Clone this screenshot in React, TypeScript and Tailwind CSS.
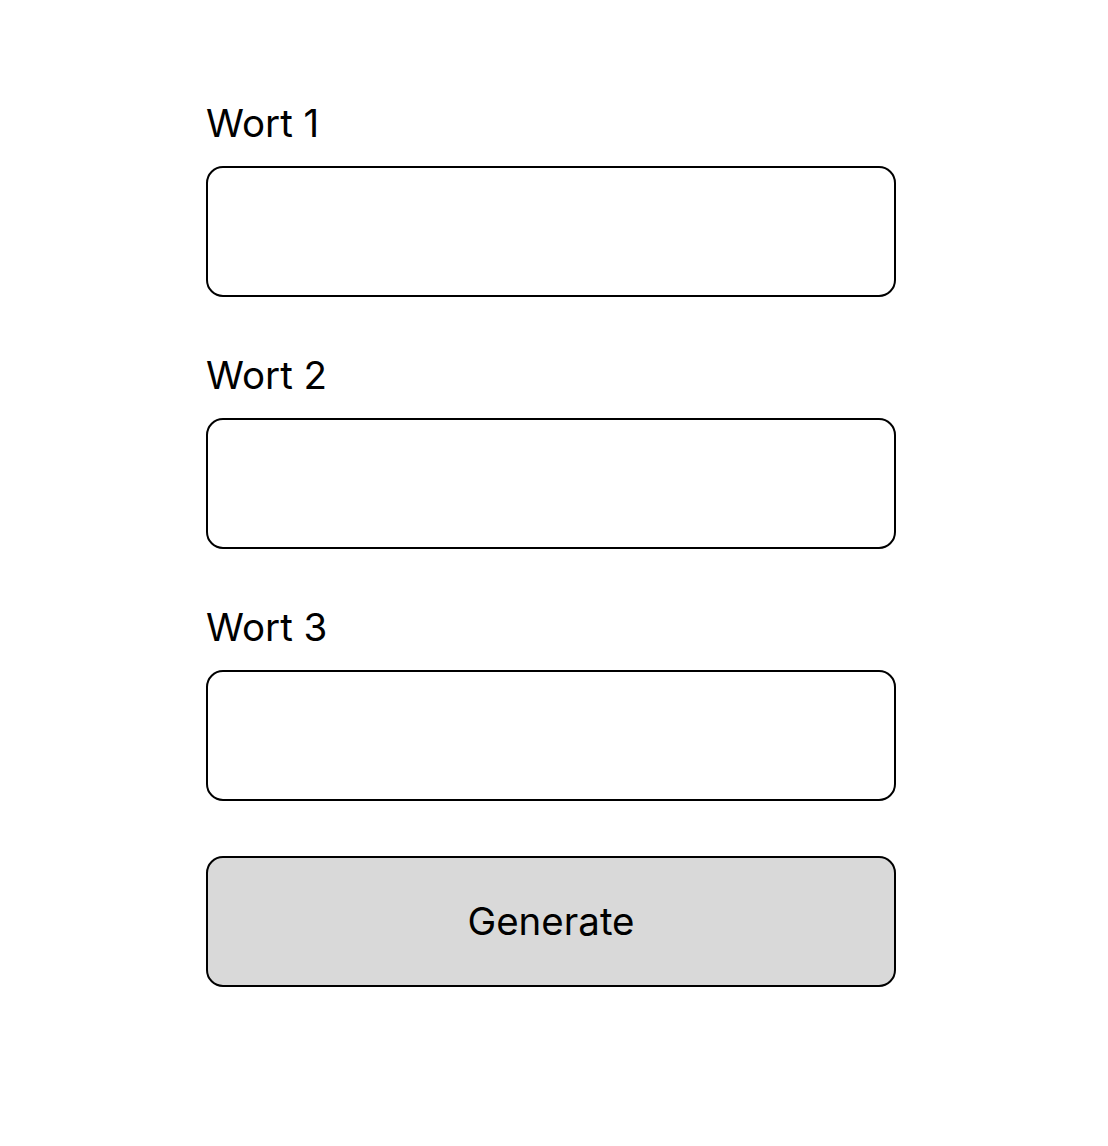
const fields = ["Wort 1", "Wort 2", "Wort 3"]

export default function App() {
  return (
    <div className="min-h-screen bg-white font-['Inter',sans-serif] text-black">
      <div className="ml-[206px] w-[690px] pt-[104px] flex flex-col">
        {fields.map((label) => (
          <div key={label} className="flex flex-col mb-[59px]">
            <label className="text-[38.5px] leading-[38px] mb-[24px]">{label}</label>
            <input className="h-[131px] w-full rounded-[17px] border-2 border-black bg-white px-4 outline-none" />
          </div>
        ))}
        <button className="-mt-[4px] h-[131px] w-full rounded-[17px] border-2 border-black bg-[#d9d9d9] text-[38.5px] leading-none">
          Generate
        </button>
      </div>
    </div>
  )
}
